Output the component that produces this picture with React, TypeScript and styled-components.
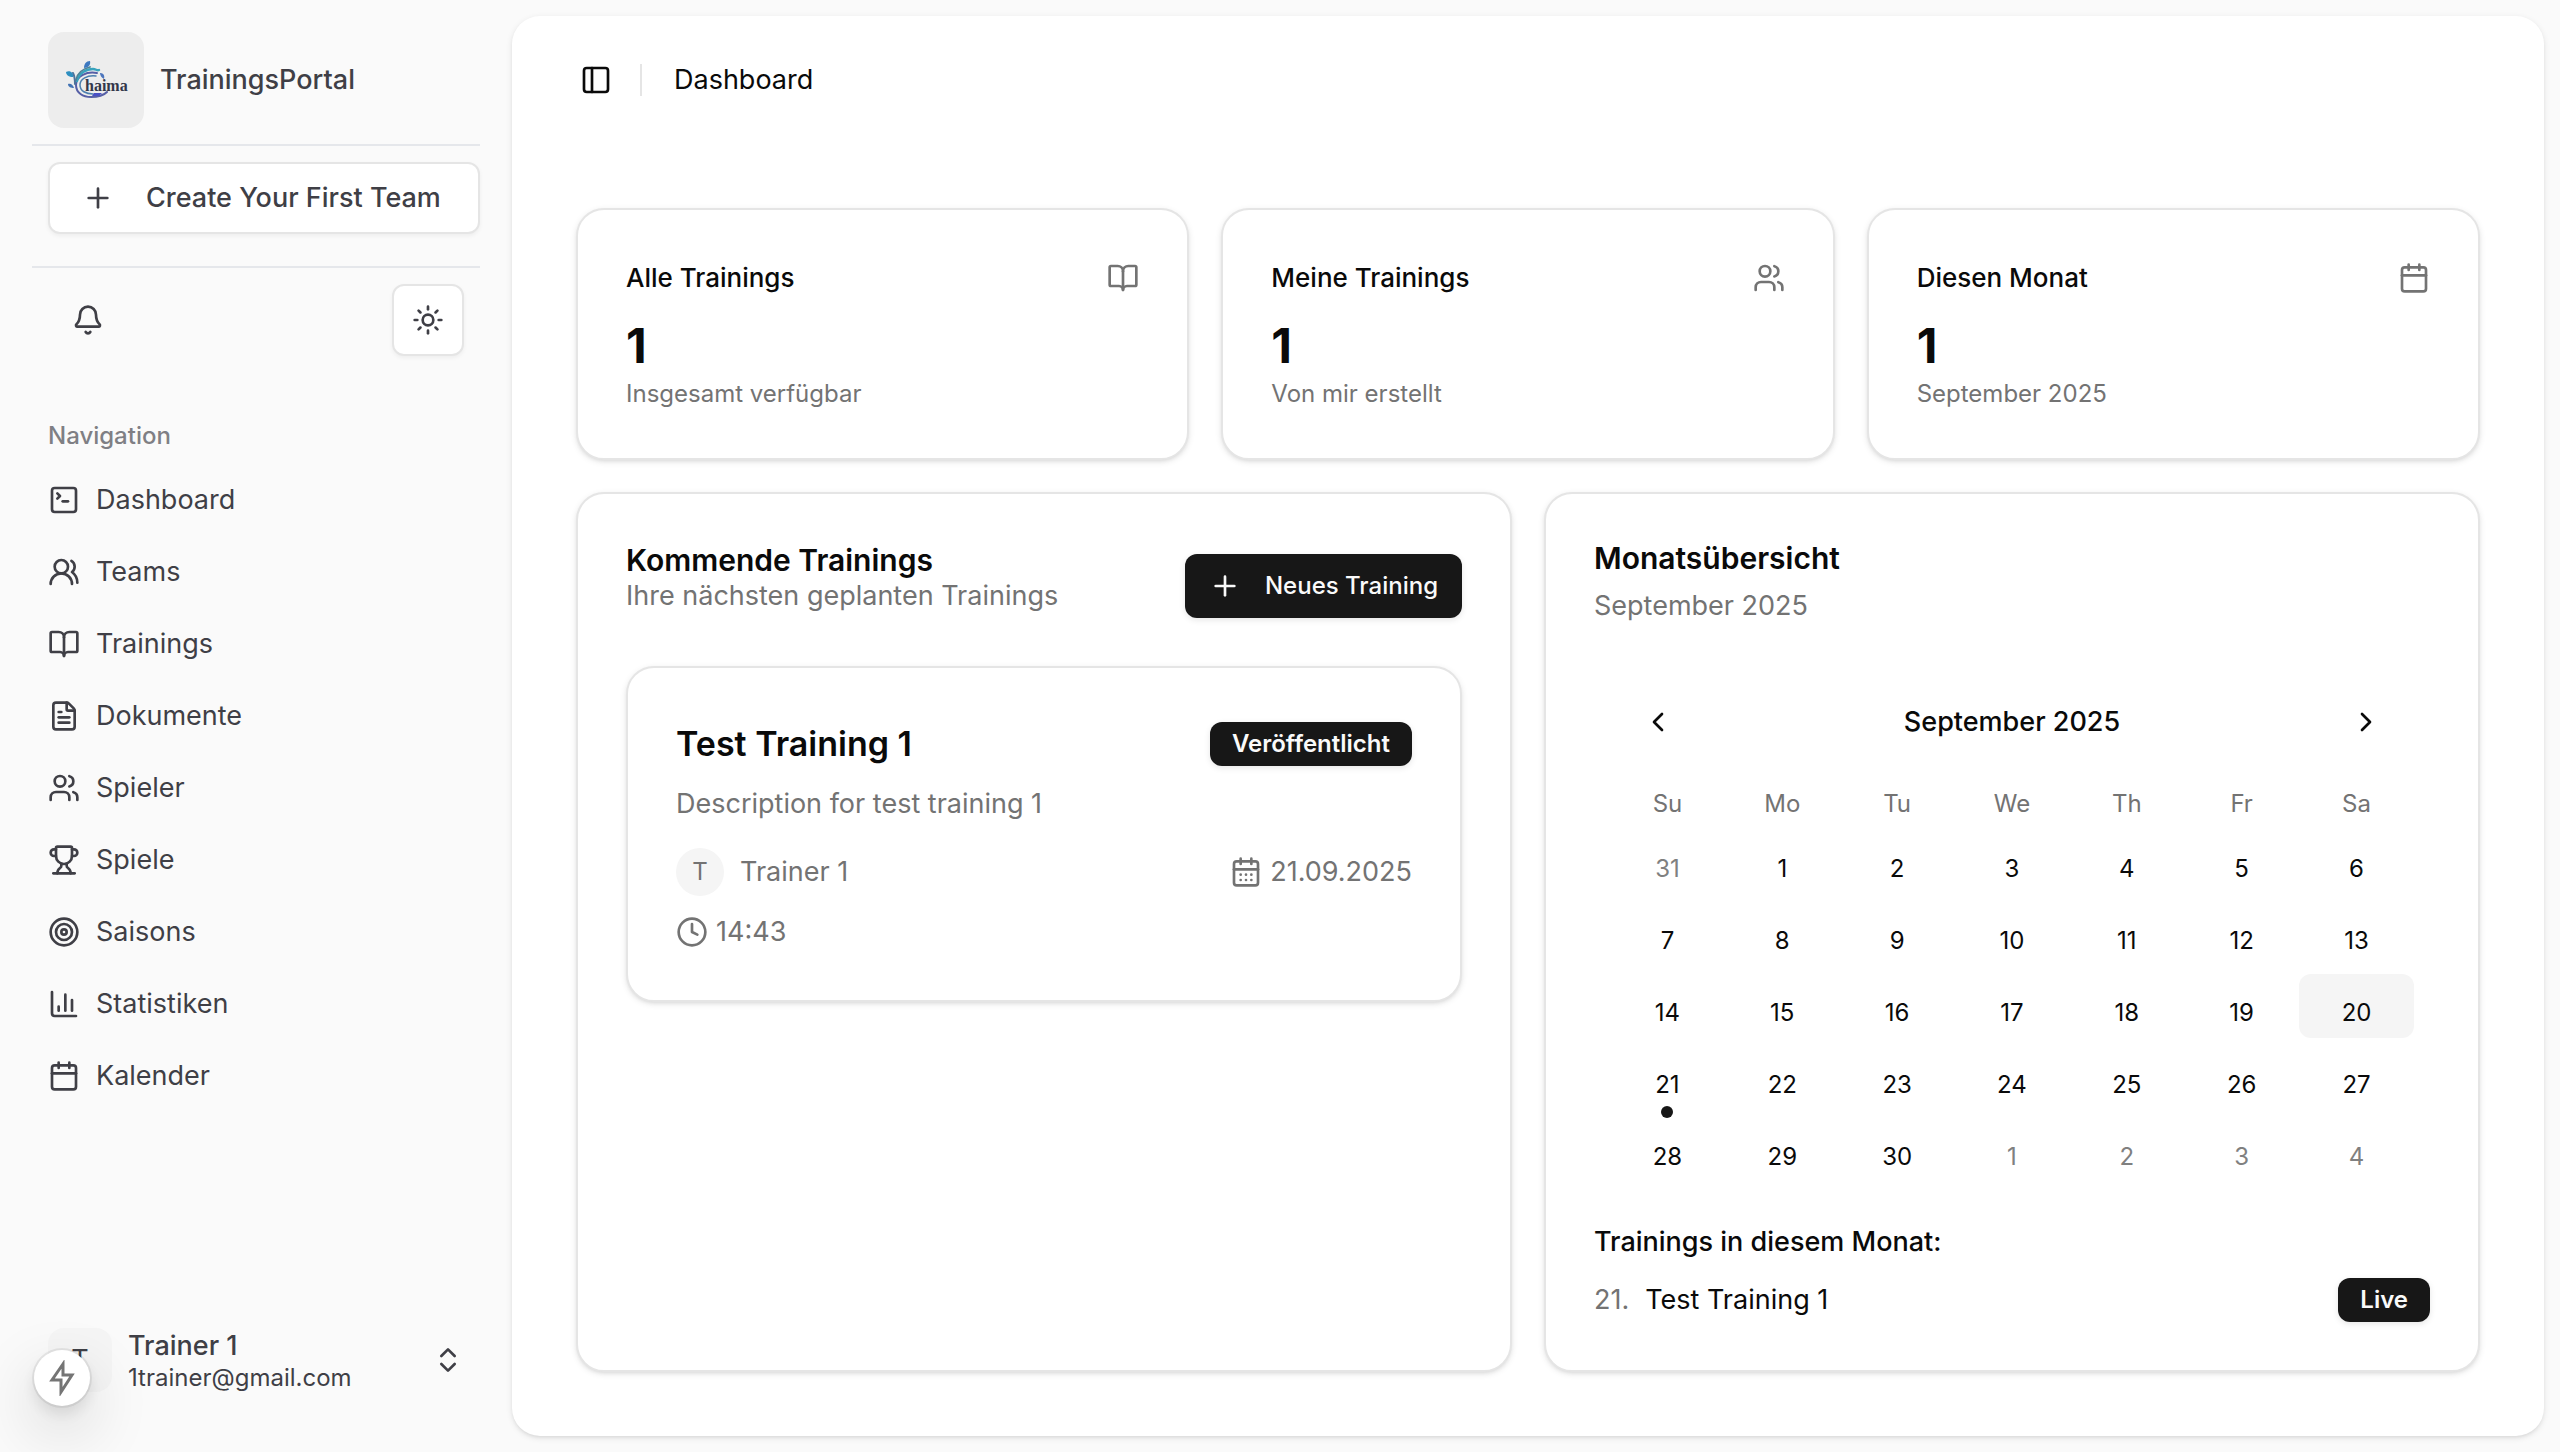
import React from 'react';
import styled, { createGlobalStyle } from 'styled-components';
import {
  Bell, BookOpen, Calendar, CalendarDays, ChartColumn, ChevronLeft, ChevronRight,
  ChevronsUpDown, Clock, FileText, PanelLeft, Plus, SquareTerminal, Sun, Target,
  Trophy, Users, UsersRound,
} from 'lucide-react';

const GlobalStyle = createGlobalStyle`
  *, *::before, *::after { box-sizing: border-box; }
  body {
    margin: 0;
    background: #fafafa;
    color: #0a0a0a;
    font-family: Inter, "Liberation Sans", sans-serif;
    font-size: 27px;
    line-height: 40px;
  }
  h1, h2, h3, h4, p, ul { margin: 0; padding: 0; }
  ul { list-style: none; }
  a { color: inherit; text-decoration: none; }
  button { font: inherit; color: inherit; background: none; border: 0; padding: 0; cursor: pointer; }
  svg { flex-shrink: 0; }
`;

const Layout = styled.div`
  display: flex;
  min-height: 100vh;
`;

const Sidebar = styled.aside`
  display: flex;
  flex-direction: column;
  flex: 0 0 512px;
  min-width: 0;
  padding: 32px 32px 44px;
  color: #3f3f46;
`;

const Brand = styled.a`
  display: flex;
  align-items: center;
  gap: 16px;
  padding: 0 16px 16px;
  font-weight: 500;
`;

const LogoTile = styled.span`
  display: grid;
  place-items: center;
  width: 96px;
  height: 96px;
  border-radius: 16px;
  background: #ededed;
`;

const Rule = styled.hr`
  width: 100%;
  height: 2px;
  margin: 0;
  border: 0;
  background: #e5e7eb;
`;

const TeamArea = styled.div`
  padding: 16px 0 32px 16px;
`;

const OutlineButton = styled.button<{ $square?: boolean }>`
  display: flex;
  align-items: center;
  justify-content: ${p => (p.$square ? 'center' : 'flex-start')};
  gap: 32px;
  width: ${p => (p.$square ? '72px' : '100%')};
  height: 72px;
  padding: ${p => (p.$square ? '0' : '0 16px 0 32px')};
  border: 2px solid #e5e5e5;
  border-radius: 12px;
  background: #fff;
  box-shadow: 0 2px 4px rgba(0, 0, 0, 0.05);
  font-weight: 500;
  white-space: nowrap;
`;

const Tools = styled.div`
  display: flex;
  align-items: center;
  justify-content: space-between;
  padding: 16px;
`;

const IconButton = styled.button`
  display: grid;
  place-items: center;
  width: 64px;
  height: 64px;
  border-radius: 12px;
`;

const BellButton = styled(IconButton)`
  width: 80px;
  height: 72px;
`;

const NavArea = styled.nav`
  flex: 1;
  padding: 32px 16px 0;
`;

const NavLabel = styled.h2`
  font-size: 24px;
  font-weight: 500;
  line-height: 64px;
  color: #7f7f84;
`;

const NavList = styled.ul`
  display: grid;
  gap: 8px;
`;

const NavLink = styled.a`
  display: flex;
  align-items: center;
  gap: 16px;
  height: 64px;
`;

const UserButton = styled.button`
  display: flex;
  align-items: center;
  gap: 16px;
  height: 96px;
  padding: 0 16px;
  text-align: left;
`;

const Avatar = styled.span<{ $round?: boolean }>`
  display: grid;
  place-items: center;
  width: ${p => (p.$round ? '48px' : '64px')};
  height: ${p => (p.$round ? '48px' : '64px')};
  border-radius: ${p => (p.$round ? '50%' : '16px')};
  background: #f5f5f5;
  font-size: ${p => (p.$round ? '24px' : '27px')};
`;

const UserText = styled.span`
  display: grid;
  flex: 1;
`;

const UserName = styled.span`
  font-weight: 500;
  line-height: 36px;
`;

const UserMail = styled.span`
  font-size: 24px;
  line-height: 28px;
`;

const QuickAction = styled.button`
  position: fixed;
  left: 34px;
  bottom: 46px;
  display: grid;
  place-items: center;
  width: 56px;
  height: 56px;
  border-radius: 50%;
  background: #fff;
  color: #757575;
  box-shadow: 0 0 0 2px rgba(0, 0, 0, 0.07), 0 8px 16px rgba(0, 0, 0, 0.1), 0 24px 64px rgba(0, 0, 0, 0.18);
`;

const Panel = styled.main`
  flex: 1;
  display: flex;
  flex-direction: column;
  min-width: 0;
  margin: 16px 16px 16px 0;
  padding: 0 64px 64px;
  border-radius: 28px;
  background: #fff;
  box-shadow: 0 2px 6px rgba(0, 0, 0, 0.1), 0 2px 4px -2px rgba(0, 0, 0, 0.1);
`;

const TopBar = styled.header`
  display: flex;
  align-items: center;
  height: 128px;
  margin-bottom: 64px;
`;

const SidebarToggle = styled(IconButton)`
  width: 40px;
  height: 56px;
`;

const TopDivider = styled.span`
  width: 2px;
  height: 32px;
  margin: 0 32px 0 24px;
  background: #e5e5e5;
`;

const PageTitle = styled.h1`
  font-size: 27px;
  font-weight: 400;
`;

const StatGrid = styled.section`
  display: grid;
  grid-template-columns: repeat(3, 1fr);
  gap: 32px;
  margin-bottom: 32px;
`;

const ContentGrid = styled.section`
  flex: 1;
  display: grid;
  grid-template-columns: repeat(2, 1fr);
  gap: 32px;
`;

const Card = styled.article`
  min-width: 0;
  padding: 48px;
  border: 2px solid #e5e5e5;
  border-radius: 28px;
  background: #fff;
  box-shadow: 0 2px 6px rgba(0, 0, 0, 0.1), 0 2px 4px -2px rgba(0, 0, 0, 0.1);
`;

const SpreadRow = styled.div`
  display: flex;
  align-items: center;
  justify-content: space-between;
`;

const StatHead = styled(SpreadRow)`
  margin-bottom: 16px;
  color: #737373;
`;

const StatTitle = styled.h2`
  font-size: 26px;
  font-weight: 500;
  color: #0a0a0a;
`;

const StatValue = styled.p`
  font-size: 48px;
  font-weight: 700;
  line-height: 64px;
`;

const StatNote = styled.p`
  font-size: 24px;
  line-height: 32px;
  color: #737373;
`;

const CardTitle = styled.h2`
  font-size: 30px;
  font-weight: 600;
  line-height: 32px;
`;

const Muted = styled.p`
  color: #737373;
`;

const UpcomingHead = styled(SpreadRow)`
  margin-bottom: 48px;
`;

const PrimaryButton = styled.button`
  display: flex;
  align-items: center;
  gap: 24px;
  height: 64px;
  margin-top: 12px;
  padding: 0 24px;
  border-radius: 12px;
  background: #171717;
  color: #fafafa;
  box-shadow: 0 2px 6px rgba(0, 0, 0, 0.1);
  font-size: 24px;
  font-weight: 500;
`;

const TrainingTitle = styled.h3`
  font-size: 34px;
  font-weight: 600;
  line-height: 56px;
`;

const Badge = styled.span`
  display: inline-flex;
  align-items: center;
  height: 44px;
  padding: 0 22px;
  border-radius: 12px;
  background: #171717;
  color: #fafafa;
  box-shadow: 0 2px 6px rgba(0, 0, 0, 0.1);
  font-size: 24px;
  font-weight: 600;
`;

const Description = styled(Muted)`
  margin: 12px 0 24px;
`;

const MetaRow = styled(SpreadRow)`
  margin-bottom: 16px;
  color: #737373;
`;

const Meta = styled.span<{ $gap: number }>`
  display: flex;
  align-items: center;
  gap: ${p => p.$gap}px;
  color: #737373;
`;

const MonthHead = styled.header`
  display: grid;
  gap: 12px;
  margin-bottom: 48px;
`;

const CalendarBox = styled.div`
  padding: 16px;
  margin-bottom: 24px;
`;

const CalendarNav = styled(SpreadRow)`
  padding: 0 16px;
  margin-bottom: 32px;
  font-weight: 500;
`;

const MonthTable = styled.table`
  width: 100%;
  table-layout: fixed;
  border-collapse: collapse;
  font-size: 24px;
  text-align: center;
`;

const Weekday = styled.th`
  padding: 0;
  font-weight: 400;
  line-height: 36px;
  color: #737373;
`;

const DayCell = styled.td`
  padding: 8px 0 0;
`;

const Day = styled.button<{ $outside: boolean; $today: boolean; $marked: boolean }>`
  position: relative;
  display: block;
  width: 100%;
  height: 64px;
  padding-top: 14px;
  border-radius: 12px;
  background: ${p => (p.$today ? '#f5f5f5' : 'transparent')};
  color: ${p => (p.$outside ? '#808080' : '#0a0a0a')};

  &::after {
    content: '';
    position: absolute;
    display: ${p => (p.$marked ? 'block' : 'none')};
    left: calc(50% - 6px);
    bottom: -8px;
    width: 12px;
    height: 12px;
    border-radius: 50%;
    background: #171717;
  }
`;

const MonthListTitle = styled.h3`
  margin-bottom: 16px;
  font-size: 27px;
  font-weight: 500;
`;

const DayNumber = styled.span`
  color: #737373;
`;

const MonthEntry = styled.span`
  display: flex;
  gap: 16px;
`;

const Logo = () => (
  <svg width="80" height="64" viewBox="-8 0 80 64" role="img" aria-label="Chaima">
    <g fill="none" strokeLinecap="round">
      <path d="M33 25c-10-2-21 3-21 12 0 8 7 12 15 12 6 0 12-1 16-5" stroke="#565fa6" strokeWidth="2" />
      <path d="M32 28c-9-1-16 3-16 9 0 6 6 9 13 9" stroke="#4c7fae" strokeWidth="1.5" />
      <path d="M13 33c2-8 9-12 16-12 3 0 4 2 6 1" stroke="#38a3bd" strokeWidth="2.4" />
      <path d="M12 32c1-6 6-11 14-13" stroke="#4d8397" strokeWidth="1.8" />
      <path d="M11 36c0-5-1-9-2-11" stroke="#4d739b" strokeWidth="2" />
    </g>
    <path d="M20 20c0-4 2-7 6-7 1 4-2 7-6 7z" fill="#3d78c0" />
    <path d="M9 29c-4 0-7-2-7-5 4-2 8 1 7 5z" fill="#2e8fc0" />
    <path d="M10 40c-3 0-6-1-6-4 3-1 5 1 6 4z" fill="#4273b4" />
    <path d="M36 25c3 0 5 2 4 6-2-1-4-3-4-6z" fill="#4d76bd" />
    <path d="M30 45h8l-3 3h-7z" fill="#4a50c4" />
    <text x="21" y="43" fontFamily="'Liberation Serif', serif" fontWeight="700" fontSize="16" fill="#33374a">haima</text>
  </svg>
);

const Bolt = () => (
  <svg width="32" height="36" viewBox="0 0 32 36" fill="none" stroke="currentColor" strokeWidth="3" aria-hidden="true">
    <path d="M17 4 6 20h9v12l11-17h-9z" />
  </svg>
);

const navItems = [
  { label: 'Dashboard', Icon: SquareTerminal },
  { label: 'Teams', Icon: UsersRound },
  { label: 'Trainings', Icon: BookOpen },
  { label: 'Dokumente', Icon: FileText },
  { label: 'Spieler', Icon: Users },
  { label: 'Spiele', Icon: Trophy },
  { label: 'Saisons', Icon: Target },
  { label: 'Statistiken', Icon: ChartColumn },
  { label: 'Kalender', Icon: Calendar },
];

const stats = [
  { title: 'Alle Trainings', value: 1, note: 'Insgesamt verfügbar', Icon: BookOpen },
  { title: 'Meine Trainings', value: 1, note: 'Von mir erstellt', Icon: Users },
  { title: 'Diesen Monat', value: 1, note: 'September 2025', Icon: Calendar },
];

const weekdays = ['Su', 'Mo', 'Tu', 'We', 'Th', 'Fr', 'Sa'];

// September 2025 starts on a Monday, so the first week opens with 31 August.
const weeks = Array.from({ length: 5 }, (_, week) =>
  Array.from({ length: 7 }, (_, weekday) => {
    const offset = week * 7 + weekday;
    const outside = offset < 1 || offset > 30;
    const day = offset < 1 ? 31 : offset > 30 ? offset - 30 : offset;
    return { day, outside };
  }),
);

const App: React.FC = () => (
  <>
    <GlobalStyle />
    <Layout>
      <Sidebar>
        <Brand href="#">
          <LogoTile><Logo /></LogoTile>
          TrainingsPortal
        </Brand>
        <Rule />
        <TeamArea>
          <OutlineButton type="button"><Plus size={32} />Create Your First Team</OutlineButton>
        </TeamArea>
        <Rule />
        <Tools>
          <BellButton type="button" aria-label="Benachrichtigungen"><Bell size={32} /></BellButton>
          <OutlineButton type="button" $square aria-label="Design wechseln"><Sun size={32} /></OutlineButton>
        </Tools>
        <NavArea>
          <NavLabel>Navigation</NavLabel>
          <NavList>
            {navItems.map(({ label, Icon }) => (
              <li key={label}>
                <NavLink href="#"><Icon size={32} />{label}</NavLink>
              </li>
            ))}
          </NavList>
        </NavArea>
        <UserButton type="button">
          <Avatar>T</Avatar>
          <UserText>
            <UserName>Trainer 1</UserName>
            <UserMail>1trainer@gmail.com</UserMail>
          </UserText>
          <ChevronsUpDown size={32} />
        </UserButton>
      </Sidebar>

      <Panel>
        <TopBar>
          <SidebarToggle type="button" aria-label="Seitenleiste umschalten"><PanelLeft size={32} /></SidebarToggle>
          <TopDivider />
          <PageTitle>Dashboard</PageTitle>
        </TopBar>

        <StatGrid>
          {stats.map(({ title, value, note, Icon }) => (
            <Card key={title}>
              <StatHead>
                <StatTitle>{title}</StatTitle>
                <Icon size={32} />
              </StatHead>
              <StatValue>{value}</StatValue>
              <StatNote>{note}</StatNote>
            </Card>
          ))}
        </StatGrid>

        <ContentGrid>
          <Card>
            <UpcomingHead>
              <div>
                <CardTitle>Kommende Trainings</CardTitle>
                <Muted>Ihre nächsten geplanten Trainings</Muted>
              </div>
              <PrimaryButton type="button"><Plus size={32} />Neues Training</PrimaryButton>
            </UpcomingHead>
            <Card>
              <SpreadRow>
                <TrainingTitle>Test Training 1</TrainingTitle>
                <Badge>Veröffentlicht</Badge>
              </SpreadRow>
              <Description>Description for test training 1</Description>
              <MetaRow>
                <Meta $gap={16}><Avatar $round>T</Avatar>Trainer 1</Meta>
                <Meta $gap={8}><CalendarDays size={32} />21.09.2025</Meta>
              </MetaRow>
              <Meta $gap={8}><Clock size={32} />14:43</Meta>
            </Card>
          </Card>

          <Card>
            <MonthHead>
              <CardTitle>Monatsübersicht</CardTitle>
              <Muted>September 2025</Muted>
            </MonthHead>
            <CalendarBox>
              <CalendarNav>
                <IconButton type="button" aria-label="Vorheriger Monat"><ChevronLeft size={32} /></IconButton>
                <span>September 2025</span>
                <IconButton type="button" aria-label="Nächster Monat"><ChevronRight size={32} /></IconButton>
              </CalendarNav>
              <MonthTable>
                <thead>
                  <tr>{weekdays.map(name => <Weekday key={name} scope="col">{name}</Weekday>)}</tr>
                </thead>
                <tbody>
                  {weeks.map((week, index) => (
                    <tr key={index}>
                      {week.map(({ day, outside }) => (
                        <DayCell key={day}>
                          <Day
                            type="button"
                            $outside={outside}
                            $today={!outside && day === 20}
                            $marked={!outside && day === 21}
                          >
                            {day}
                          </Day>
                        </DayCell>
                      ))}
                    </tr>
                  ))}
                </tbody>
              </MonthTable>
            </CalendarBox>
            <MonthListTitle>Trainings in diesem Monat:</MonthListTitle>
            <SpreadRow>
              <MonthEntry><DayNumber>21.</DayNumber>Test Training 1</MonthEntry>
              <Badge>Live</Badge>
            </SpreadRow>
          </Card>
        </ContentGrid>
      </Panel>
    </Layout>
    <QuickAction type="button" aria-label="Schnellaktionen"><Bolt /></QuickAction>
  </>
);

export default App;
